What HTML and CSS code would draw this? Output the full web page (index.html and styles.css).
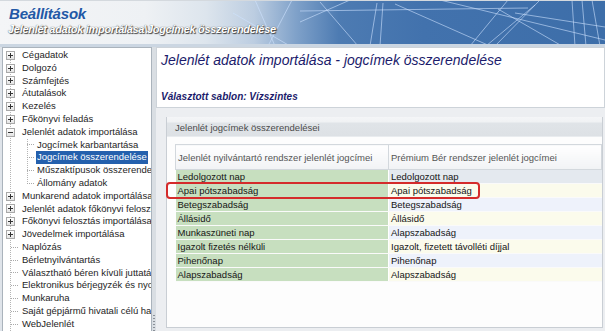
FILE: index.html
```html
<!DOCTYPE html>
<html lang="hu">
<head>
    <meta charset="UTF-8">
    <title>Beállítások</title>
    <link rel="stylesheet" href="styles.css">
</head>
<body>
    <header class="banner">
        <svg class="banner-lines" width="605" height="44" viewBox="0 0 605 44">
            <g stroke="#cfe2ff" stroke-width="0.8" stroke-opacity="0.75" fill="none">
                <line x1="233" y1="13" x2="290" y2="46"/>
                <line x1="255" y1="0" x2="275" y2="46"/>
                <line x1="268" y1="46" x2="292" y2="0"/>
                <line x1="320" y1="2" x2="358" y2="46"/>
                <line x1="350" y1="0" x2="300" y2="22"/>
                <line x1="300" y1="11" x2="528" y2="8"/>
                <line x1="377" y1="3" x2="370" y2="46"/>
                <line x1="383" y1="3" x2="380" y2="46"/>
                <line x1="395" y1="4" x2="490" y2="46"/>
                <line x1="470" y1="46" x2="508" y2="0"/>
                <line x1="486" y1="46" x2="535" y2="5"/>
                <line x1="498" y1="9" x2="562" y2="46"/>
                <line x1="515" y1="13" x2="605" y2="27"/>
                <line x1="540" y1="0" x2="495" y2="46"/>
                <line x1="572" y1="0" x2="575" y2="46"/>
                <line x1="582" y1="0" x2="586" y2="46"/>
                <line x1="592" y1="0" x2="600" y2="46"/>
                <line x1="440" y1="0" x2="605" y2="40"/>
            </g>
        </svg>
        <div class="banner-title">Beállítások</div>
        <div class="banner-path">Jelenlét adatok importálása\Jogcímek összerendelése</div>
    </header>
    <div class="strip"></div>

    <div class="workspace">
        <nav class="tree">
            <ul class="tree-root">
                <li><span class="exp plus"></span><span class="label">Cégadatok</span></li>
                <li><span class="exp plus"></span><span class="label">Dolgozó</span></li>
                <li><span class="exp plus"></span><span class="label">Számfejtés</span></li>
                <li><span class="exp plus"></span><span class="label">Átutalások</span></li>
                <li><span class="exp plus"></span><span class="label">Kezelés</span></li>
                <li><span class="exp plus"></span><span class="label">Főkönyvi feladás</span></li>
                <li><span class="exp"></span><span class="label">Jelenlét adatok importálása</span></li>
                <li class="branch">
                    <ul class="tree-sub">
                        <li><span class="twig"></span><span class="label">Jogcímek karbantartása</span></li>
                        <li><span class="twig"></span><span class="label selected">Jogcímek összerendelése</span></li>
                        <li><span class="twig"></span><span class="label">Műszaktípusok összerendelése</span></li>
                        <li><span class="twig"></span><span class="label">Állomány adatok</span></li>
                    </ul>
                </li>
                <li><span class="exp plus"></span><span class="label">Munkarend adatok importálása</span></li>
                <li><span class="exp plus"></span><span class="label">Jelenlét adatok főkönyvi felosztása</span></li>
                <li><span class="exp plus"></span><span class="label">Főkönyvi felosztás importálása</span></li>
                <li><span class="exp plus"></span><span class="label">Jövedelmek importálása</span></li>
                <li><span class="twig"></span><span class="label">Naplózás</span></li>
                <li><span class="twig"></span><span class="label">Bérletnyilvántartás</span></li>
                <li><span class="twig"></span><span class="label">Választható béren kívüli juttatások</span></li>
                <li><span class="twig"></span><span class="label">Elektronikus bérjegyzék és nyomtatás</span></li>
                <li><span class="twig"></span><span class="label">Munkaruha</span></li>
                <li><span class="twig"></span><span class="label">Saját gépjármű hivatali célú használata</span></li>
                <li><span class="twig"></span><span class="label">WebJelenlét</span></li>
            </ul>
        </nav>

        <div class="splitter"><span class="grip"></span></div>

        <main class="content">
            <section class="page-head">
                <h1>Jelenlét adatok importálása - jogcímek összerendelése</h1>
                <p class="template">Választott sablon: Vízszintes</p>
            </section>

            <section class="group">
                <div class="group-head">Jelenlét jogcímek összerendelései</div>
                <div class="group-body">
                    <div class="table-wrap">
                        <table class="map">
                            <thead>
                                <tr>
                                    <th>Jelenlét nyilvántartó rendszer jelenlét jogcímei</th>
                                    <th>Prémium Bér rendszer jelenlét jogcímei</th>
                                </tr>
                            </thead>
                            <tbody>
                                <tr class="current"><td>Ledolgozott nap</td><td>Ledolgozott nap</td></tr>
                                <tr class="odd"><td>Apai pótszabadság</td><td>Apai pótszabadság</td></tr>
                                <tr class="even"><td>Betegszabadság</td><td>Betegszabadság</td></tr>
                                <tr class="odd"><td>Állásidő</td><td>Állásidő</td></tr>
                                <tr class="even"><td>Munkaszüneti nap</td><td>Alapszabadság</td></tr>
                                <tr class="odd"><td>Igazolt fizetés nélküli</td><td>Igazolt, fizetett távolléti díjjal</td></tr>
                                <tr class="even"><td>Pihenőnap</td><td>Pihenőnap</td></tr>
                                <tr class="odd"><td>Alapszabadság</td><td>Alapszabadság</td></tr>
                            </tbody>
                        </table>
                        <span class="highlight"></span>
                    </div>
                </div>
            </section>
        </main>
    </div>
</body>
</html>
```

FILE: styles.css
```css
/* Alap */
* {
    margin: 0;
    padding: 0;
    box-sizing: border-box;
}

body {
    width: 605px;
    height: 331px;
    overflow: hidden;
    font-family: "Liberation Sans", Arial, sans-serif;
    font-size: 9.5px;
    color: #1a1a1a;
    background: #dfe4ea;
}

/* Fejléc sáv */
.banner {
    position: relative;
    height: 44px;
    overflow: hidden;
    border-top: 1px solid #d4d9de;
    background: linear-gradient(90deg, #f4f5f7 0%, #eef1f4 24%, #dde5ed 34%, #bccde1 42%, #7fa1c9 49%, #4d7bb2 56%, #4272ad 70%, #3d6ea9 100%);
}

.banner-lines {
    position: absolute;
    left: 0;
    top: -1px;
}

.banner-title {
    position: relative;
    padding: 4px 0 0 9px;
    height: 22px;
    font-size: 15px;
    font-weight: bold;
    font-style: italic;
    color: #2258a6;
    letter-spacing: -0.2px;
}

.banner-path {
    position: relative;
    padding-left: 8px;
    font-size: 11px;
    font-style: italic;
    font-weight: bold;
    letter-spacing: -0.3px;
    color: #fff;
    text-shadow: 0 0 1px #333, 1px 1px 1px #444;
}

.strip {
    height: 3px;
    background: #cbd6e2;
}

/* Munkaterület */
.workspace {
    display: flex;
    height: 284px;
}

/* Fa nézet */
.tree {
    width: 150px;
    margin-left: 2px;
    background: #fff;
    border: 1px solid #aab3bc;
    border-bottom: none;
    overflow: hidden;
    white-space: nowrap;
}

.tree ul {
    list-style: none;
}

.tree-root {
    padding-top: 1px;
    background: repeating-linear-gradient(to bottom, #b5b5b5 0 1px, transparent 1px 2px) no-repeat 7px 6px / 1px 290px;
}

.tree li {
    display: flex;
    align-items: center;
    height: 12.8px;
    line-height: 12.8px;
}

.tree li.branch {
    display: block;
    height: auto;
}

.tree-sub {
    margin-left: 24px;
    background: repeating-linear-gradient(to bottom, #b5b5b5 0 1px, transparent 1px 2px) no-repeat 0 0 / 1px 45px;
}

.tree-sub .twig {
    width: 8px;
    margin: 0 1px 0 0;
}

.exp {
    position: relative;
    width: 9px;
    height: 9px;
    margin: 0 6px 0 3px;
    border: 1px solid #a9a9a9;
    background: linear-gradient(#fff, #e4e4e4);
    flex-shrink: 0;
}

.exp::before {
    content: '';
    position: absolute;
    left: 1px;
    top: 3px;
    width: 5px;
    height: 1px;
    background: #333;
}

.exp.plus::after {
    content: '';
    position: absolute;
    left: 3px;
    top: 1px;
    width: 1px;
    height: 5px;
    background: #333;
}

.twig {
    width: 8px;
    height: 1px;
    margin: 0 2px 0 8px;
    background: repeating-linear-gradient(to right, #aaa 0 1px, transparent 1px 2px);
    flex-shrink: 0;
}

.label {
    padding: 0 1px;
    color: #1e1e1e;
}

.label.selected {
    background: #2460ad;
    color: #fff;
}

/* Elválasztó */
.splitter {
    position: relative;
    width: 4px;
    background: #d9dee3;
}

.grip {
    position: absolute;
    left: 1px;
    bottom: 0;
    width: 2px;
    height: 16px;
    background: repeating-linear-gradient(to bottom, #8a9098 0 1px, transparent 1px 3px);
}

/* Tartalom */
.content {
    flex: 1;
    display: flex;
    flex-direction: column;
    background: #eceef1;
}

.page-head {
    height: 61px;
    padding: 3px 4px 0 4px;
    background: #fff;
    border: 1px solid #cdd3d9;
}

.page-head h1 {
    font-size: 14px;
    line-height: 18px;
    font-weight: normal;
    font-style: italic;
    color: #1b1b6b;
}

.template {
    margin-top: 21px;
    line-height: 13px;
    font-size: 10px;
    font-weight: bold;
    font-style: italic;
    color: #1b1b6b;
}

.group {
    flex: 1;
    margin: 9px 2px 3px 10px;
    display: flex;
    flex-direction: column;
    border: 1px solid #c9ced4;
    border-top: none;
    background: #fff;
}

.group-head {
    height: 20px;
    padding: 5px 0 0 8px;
    color: #4a4a4a;
    background: linear-gradient(#f4f5f7 0, #f0f2f4 5px, #e0e4e8 6px, #dde1e5 100%);
    border-bottom: 1px solid #e9ecef;
}

.group-body {
    flex: 1;
    padding: 7px 0 0 8px;
    background: #fdfdfd;
}

.table-wrap {
    position: relative;
    width: 426px;
}

.map {
    width: 426px;
    border-collapse: collapse;
    table-layout: fixed;
}

.map th {
    height: 25px;
    padding: 0 0 0 2px;
    text-align: left;
    font-weight: normal;
    color: #555;
    background: linear-gradient(#fff, #f1f3f5);
    border: 1px solid #d3d8dd;
    width: 213px;
}

.map td {
    height: 14px;
    padding: 0 0 0 2px;
    color: #151515;
    border-bottom: 1px solid #fafafa;
    white-space: nowrap;
    overflow: hidden;
}

.map td:first-child {
    background: #c7dfbf;
    border-right: 1px solid #fff;
}

.map tr.current td:last-child { background: #e4e9ef; }
.map tr.odd td:last-child { background: #fbfbec; }
.map tr.even td:last-child { background: #eef2fb; }

/* Kiemelés */
.highlight {
    position: absolute;
    left: -9px;
    top: 38px;
    width: 314px;
    height: 17px;
    border: 2px solid #d42b2b;
    border-radius: 4px;
}
```
